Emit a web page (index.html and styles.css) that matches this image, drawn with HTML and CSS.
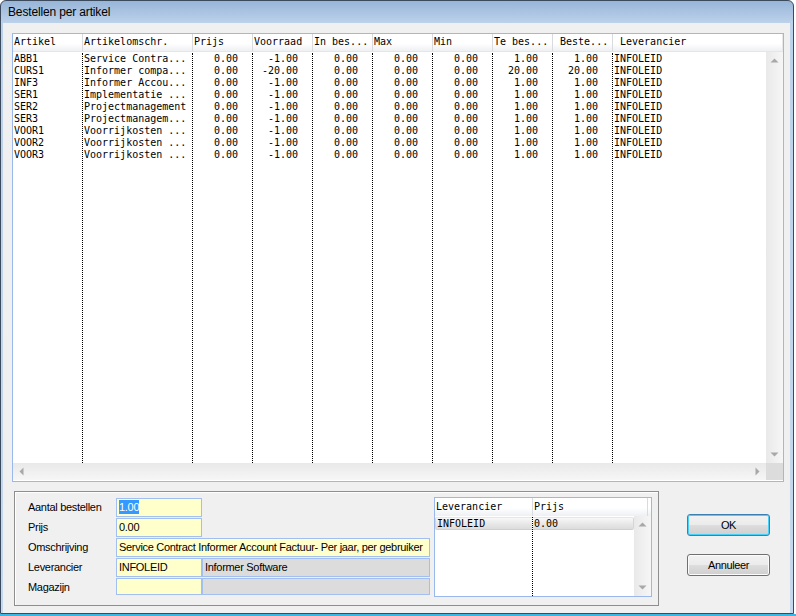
FILE: index.html
```html
<!DOCTYPE html>
<html>
<head>
<meta charset="utf-8">
<title>Bestellen per artikel</title>
<link rel="stylesheet" href="styles.css">
</head>
<body>
<div class="window">
  <div class="titlebar">Bestellen per artikel</div>
  <div class="client">
    <div class="grid">
      <div class="ghead">
        <div class="hc w1">Artikel</div>
        <div class="hc w2">Artikelomschr.</div>
        <div class="hc w3">Prijs</div>
        <div class="hc w3">Voorraad</div>
        <div class="hc w3">In bes...</div>
        <div class="hc w3">Max</div>
        <div class="hc w3">Min</div>
        <div class="hc w3">Te bes...</div>
        <div class="hc w3"> Beste...</div>
        <div class="hc hlast"> Leverancier</div>
      </div>
      <div class="gmid">
        <div class="cols">
          <div class="col w1">
            <div class="cell">ABB1</div><div class="cell">CURS1</div><div class="cell">INF3</div><div class="cell">SER1</div><div class="cell">SER2</div><div class="cell">SER3</div><div class="cell">VOOR1</div><div class="cell">VOOR2</div><div class="cell">VOOR3</div>
          </div>
          <div class="col w2">
            <div class="cell">Service Contra...</div><div class="cell">Informer compa...</div><div class="cell">Informer Accou...</div><div class="cell">Implementatie ...</div><div class="cell">Projectmanagement</div><div class="cell">Projectmanagem...</div><div class="cell">Voorrijkosten ...</div><div class="cell">Voorrijkosten ...</div><div class="cell">Voorrijkosten ...</div>
          </div>
          <div class="col w3 num">
            <div class="cell">0.00</div><div class="cell">0.00</div><div class="cell">0.00</div><div class="cell">0.00</div><div class="cell">0.00</div><div class="cell">0.00</div><div class="cell">0.00</div><div class="cell">0.00</div><div class="cell">0.00</div>
          </div>
          <div class="col w3 num">
            <div class="cell">-1.00</div><div class="cell">-20.00</div><div class="cell">-1.00</div><div class="cell">-1.00</div><div class="cell">-1.00</div><div class="cell">-1.00</div><div class="cell">-1.00</div><div class="cell">-1.00</div><div class="cell">-1.00</div>
          </div>
          <div class="col w3 num">
            <div class="cell">0.00</div><div class="cell">0.00</div><div class="cell">0.00</div><div class="cell">0.00</div><div class="cell">0.00</div><div class="cell">0.00</div><div class="cell">0.00</div><div class="cell">0.00</div><div class="cell">0.00</div>
          </div>
          <div class="col w3 num">
            <div class="cell">0.00</div><div class="cell">0.00</div><div class="cell">0.00</div><div class="cell">0.00</div><div class="cell">0.00</div><div class="cell">0.00</div><div class="cell">0.00</div><div class="cell">0.00</div><div class="cell">0.00</div>
          </div>
          <div class="col w3 num">
            <div class="cell">0.00</div><div class="cell">0.00</div><div class="cell">0.00</div><div class="cell">0.00</div><div class="cell">0.00</div><div class="cell">0.00</div><div class="cell">0.00</div><div class="cell">0.00</div><div class="cell">0.00</div>
          </div>
          <div class="col w3 num">
            <div class="cell">1.00</div><div class="cell">20.00</div><div class="cell">1.00</div><div class="cell">1.00</div><div class="cell">1.00</div><div class="cell">1.00</div><div class="cell">1.00</div><div class="cell">1.00</div><div class="cell">1.00</div>
          </div>
          <div class="col w3 num">
            <div class="cell">1.00</div><div class="cell">20.00</div><div class="cell">1.00</div><div class="cell">1.00</div><div class="cell">1.00</div><div class="cell">1.00</div><div class="cell">1.00</div><div class="cell">1.00</div><div class="cell">1.00</div>
          </div>
          <div class="col clast">
            <div class="cell">INFOLEID</div><div class="cell">INFOLEID</div><div class="cell">INFOLEID</div><div class="cell">INFOLEID</div><div class="cell">INFOLEID</div><div class="cell">INFOLEID</div><div class="cell">INFOLEID</div><div class="cell">INFOLEID</div><div class="cell">INFOLEID</div>
          </div>
        </div>
        <div class="vscroll">
          <svg class="sbtn" width="17" height="17" viewBox="0 0 17 17"><polygon points="4.5,10.5 8.5,6.5 12.5,10.5" fill="#a8a8a8"/></svg>
          <svg class="sbtn" width="17" height="17" viewBox="0 0 17 17"><polygon points="4.5,6.5 8.5,10.5 12.5,6.5" fill="#a8a8a8"/></svg>
        </div>
      </div>
      <div class="gbot">
        <div class="hscroll">
          <svg class="sbtn" width="17" height="17" viewBox="0 0 17 17"><polygon points="10.5,4.5 6.5,8.5 10.5,12.5" fill="#a8a8a8"/></svg>
          <svg class="sbtn" width="17" height="17" viewBox="0 0 17 17"><polygon points="6.5,4.5 10.5,8.5 6.5,12.5" fill="#a8a8a8"/></svg>
        </div>
        <div class="corner"></div>
      </div>
    </div>

    <div class="lower">
      <div class="group">
        <div class="form">
          <div class="lbl">Aantal bestellen</div>
          <div class="inp"><span class="sel">1.00</span></div>
          <div class="empty"></div>
          <div class="lbl">Prijs</div>
          <div class="inp">0.00</div>
          <div class="empty"></div>
          <div class="lbl">Omschrijving</div>
          <div class="inp wide">Service Contract Informer Account Factuur- Per jaar, per gebruiker</div>
          <div class="lbl">Leverancier</div>
          <div class="inp">INFOLEID</div>
          <div class="inp grey">Informer Software</div>
          <div class="lbl">Magazijn</div>
          <div class="inp"></div>
          <div class="inp grey"></div>
        </div>
        <div class="mgrid">
          <div class="mhead">
            <div class="mh m1">Leverancier</div>
            <div class="mh m2">Prijs</div>
            <div class="mh m3"></div>
          </div>
          <div class="mbody">
            <div class="mcols">
              <div class="mcol m1"><div class="mcell first">INFOLEID</div></div>
              <div class="mcol m2r"><div class="mcell last">0.00</div></div>
            </div>
            <div class="mscroll">
              <svg class="sbtn" width="17" height="17" viewBox="0 0 17 17"><polygon points="4.5,10.5 8.5,6.5 12.5,10.5" fill="#a8a8a8"/></svg>
              <svg class="sbtn" width="17" height="17" viewBox="0 0 17 17"><polygon points="4.5,6.5 8.5,10.5 12.5,6.5" fill="#a8a8a8"/></svg>
            </div>
          </div>
        </div>
      </div>
      <div class="buttons">
        <button class="btn default">OK</button>
        <button class="btn">Annuleer</button>
      </div>
    </div>
  </div>
</div>
</body>
</html>
```

FILE: styles.css
```css
* { box-sizing: border-box; }
html, body { margin: 0; padding: 0; }
body {
  width: 796px;
  height: 616px;
  overflow: hidden;
  background: linear-gradient(#ffffff 614px, #3ab7e4 614px);
  font-family: "Liberation Sans", Arial, sans-serif;
}
.window {
  width: 794px;
  height: 614px;
  border: 1px solid #3b4a5c;
  border-radius: 6px 6px 0 0;
  background: linear-gradient(#98b5d8, #bcd2ea 22px, #c5d8ed);
  padding: 0 3px 0 2px;
  display: flex;
  flex-direction: column;
}
.titlebar {
  height: 22px;
  line-height: 23px;
  padding-left: 5px;
  font-size: 12px;
  letter-spacing: -0.15px;
  color: #000;
}
.client {
  flex: 1;
  background: #f0f0f0;
  padding: 10px 6px 0 9px;
}

/* main grid */
.grid {
  width: 772px;
  height: 449px;
  border: 1px solid #9bb8ea;
  background: #fff;
  display: flex;
  flex-direction: column;
}
.ghead {
  display: flex;
  height: 18px;
  background: linear-gradient(#ffffff, #ffffff 55%, #eef0f3);
  border-bottom: 1px solid #e4e6ea;
}
.hc, .cell, .mh, .mcell {
  font-family: "DejaVu Sans Mono", "Liberation Mono", monospace;
  font-size: 10px;
  white-space: pre;
  overflow: hidden;
  color: #000;
}
.hc {
  line-height: 16px;
  padding-left: 1px;
  border-right: 1px solid #d9dbdf;
}
.w1 { width: 70px; }
.w2 { width: 110px; }
.w3 { width: 60px; }
.hlast { flex: 1; border-right-color: #e8e8e8; }
.gmid {
  display: flex;
  height: 411px;
}
.cols {
  display: flex;
  width: 753px;
  padding-top: 1px;
}
.col {
  border-right: 1px dotted #000;
}
.col.clast { flex: 1; border-right: none; }
.cell {
  height: 12px;
  line-height: 12px;
  padding-left: 1px;
}
.num .cell {
  text-align: right;
  padding-left: 0;
  padding-right: 14px;
}
.vscroll {
  width: 17px;
  background: linear-gradient(to right, #e9e9e9, #f6f6f6);
  display: flex;
  flex-direction: column;
  justify-content: space-between;
}
.sbtn { display: block; }
.gbot {
  display: flex;
  height: 17px;
}
.hscroll {
  width: 753px;
  background: linear-gradient(#e9e9e9, #f6f6f6);
  display: flex;
  justify-content: space-between;
}
.corner {
  flex: 1;
  background: #dcdcdc;
}

/* lower area */
.lower {
  display: flex;
  align-items: flex-start;
  margin-top: 9px;
  padding-left: 2px;
}
.group {
  width: 645px;
  height: 115px;
  border: 1px solid #8e8e8e;
  box-shadow: inset 1px 1px 0 #ffffff;
  display: flex;
  align-items: flex-start;
}
.form {
  margin-top: 6px;
  display: grid;
  grid-template-columns: 101px 86px 228px;
  grid-template-rows: 19px 19px 19px 19px 17px;
  row-gap: 1px;
  font-size: 11px;
  letter-spacing: -0.3px;
}
.lbl {
  padding-left: 13px;
  line-height: 19px;
  color: #000;
}
.inp {
  border: 1px solid #a3bfef;
  background: #ffffcc;
  padding-left: 2px;
  line-height: 17px;
  white-space: nowrap;
  overflow: hidden;
  color: #000;
}
.inp.wide { grid-column: 2 / 4; }
.inp.grey { background: #dcdcdc; }
.sel {
  background: #3399ff;
  color: #fff;
  display: inline-block;
  line-height: 14px;
}

/* mini grid */
.mgrid {
  margin-top: 5px;
  margin-left: 4px;
  width: 218px;
  height: 100px;
  border: 1px solid #9bb8ea;
  background: #fff;
  display: flex;
  flex-direction: column;
}
.mhead {
  display: flex;
  height: 18px;
  background: linear-gradient(#ffffff, #ffffff 55%, #eef0f3);
}
.mh {
  line-height: 17px;
  padding-left: 1px;
  border-right: 1px solid #d9dbdf;
}
.mh.m1 { width: 98px; }
.mh.m2 { width: 115px; }
.mh.m3 { flex: 1; border-right: none; }
.mbody {
  flex: 1;
  display: flex;
}
.mcols {
  width: 199px;
  display: flex;
  padding-top: 1px;
}
.mcol.m1 { width: 98px; border-right: 1px dotted #000; }
.mcol.m2r { flex: 1; }
.mcell {
  height: 13px;
  line-height: 12px;
  padding-left: 1px;
  background: linear-gradient(#f8f8f8, #e9e9e9 50%, #dcdcdc);
  border-top: 1px solid #e6e6e6;
  border-bottom: 1px solid #cfcfcf;
}
.mcell.first { border-left: 1px solid #d6d6d6; border-radius: 2px 0 0 2px; padding-left: 1px; }
.mcell.last { border-right: 1px solid #d6d6d6; border-radius: 0 2px 2px 0; }
.mscroll {
  flex: 1;
  background: linear-gradient(to right, #e9e9e9, #f6f6f6);
  display: flex;
  flex-direction: column;
  justify-content: space-between;
}

/* buttons */
.buttons {
  margin-left: 28px;
  margin-top: 23px;
  display: flex;
  flex-direction: column;
  gap: 18px;
}
.btn {
  width: 83px;
  height: 22px;
  margin: 0;
  padding: 0;
  border: 1px solid #707070;
  border-radius: 3px;
  background: linear-gradient(#f2f2f2, #ebebeb 50%, #dddddd 51%, #cfcfcf);
  box-shadow: inset 0 0 0 1px #fbfbfb;
  font-family: "Liberation Sans", Arial, sans-serif;
  font-size: 11px;
  letter-spacing: -0.4px;
  color: #000;
}
.btn.default {
  border-color: #3c7fb1;
  box-shadow: inset 0 0 0 1px #48d1f8;
}
```
